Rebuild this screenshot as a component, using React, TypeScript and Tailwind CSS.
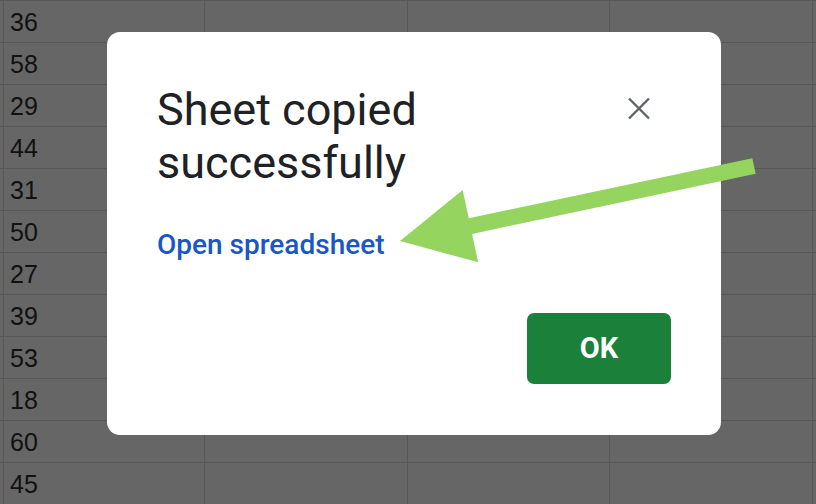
import React from "react";

const values = ["36", "58", "29", "44", "31", "50", "27", "39", "53", "18", "60", "45"];

function SheetRow({ value }: { value: string }) {
  return (
    <div className="flex h-[42px] shrink-0 border-b border-[#575757]">
      <div className="w-[3px] shrink-0" />
      <div className="flex w-[201px] shrink-0 items-center border-l border-[#575757] pl-[6px] pt-[3px] text-[25px] text-[#111111]">
        {value}
      </div>
      <div className="w-[203px] shrink-0 border-l border-[#575757]" />
      <div className="w-[202px] shrink-0 border-l border-[#575757]" />
      <div className="w-[203px] shrink-0 border-l border-[#575757]" />
      <div className="flex-1 border-l border-[#575757]" />
    </div>
  );
}

export default function App() {
  return (
    <div
      className="relative h-[504px] w-[816px] overflow-hidden bg-[#666666]"
      style={{ fontFamily: '"Liberation Sans", Arial, sans-serif' }}
    >
      {/* Spreadsheet behind the scrim */}
      <div className="flex flex-col border-t border-[#575757]">
        {values.map((v, i) => (
          <SheetRow key={i} value={v} />
        ))}
      </div>

      {/* Dialog */}
      <div
        className="absolute left-[107px] top-[32px] flex h-[403px] w-[614px] flex-col rounded-[13px] bg-white pl-[50px] pr-[50px] pt-[51px]"
        style={{ fontFamily: "Roboto, Arial, sans-serif" }}
      >
        <div className="flex items-start justify-between">
          <h1 className="text-[45px] leading-[53px] font-normal text-[#202124]">
            Sheet copied
            <br />
            successfully
          </h1>
          <button className="mr-[21px] mt-[14px]" aria-label="Close">
            <svg width="22" height="23" viewBox="0 0 22 23">
              <path d="M1 1.5 21 21.5M21 1.5 1 21.5" stroke="#5f6368" strokeWidth="2.4" />
            </svg>
          </button>
        </div>

        <a className="mt-[38px] block text-[28px] leading-[36px] font-medium text-[#1a56c4]">
          Open spreadsheet
        </a>

        <div className="mt-[50px] flex justify-end">
          <button className="flex h-[71px] w-[144px] items-center justify-center rounded-[7px] bg-[#1a803a] text-[29px] font-bold text-white">
            OK
          </button>
        </div>
      </div>

      {/* Annotation arrow */}
      <svg className="pointer-events-none absolute inset-0" width="816" height="504" viewBox="0 0 816 504">
        <polygon
          points="752.3,158.2 755.7,173.8 472.1,233.9 478.1,262.3 400,241 462.7,189.9 468.7,218.3"
          fill="#94d45f"
        />
      </svg>
    </div>
  );
}
